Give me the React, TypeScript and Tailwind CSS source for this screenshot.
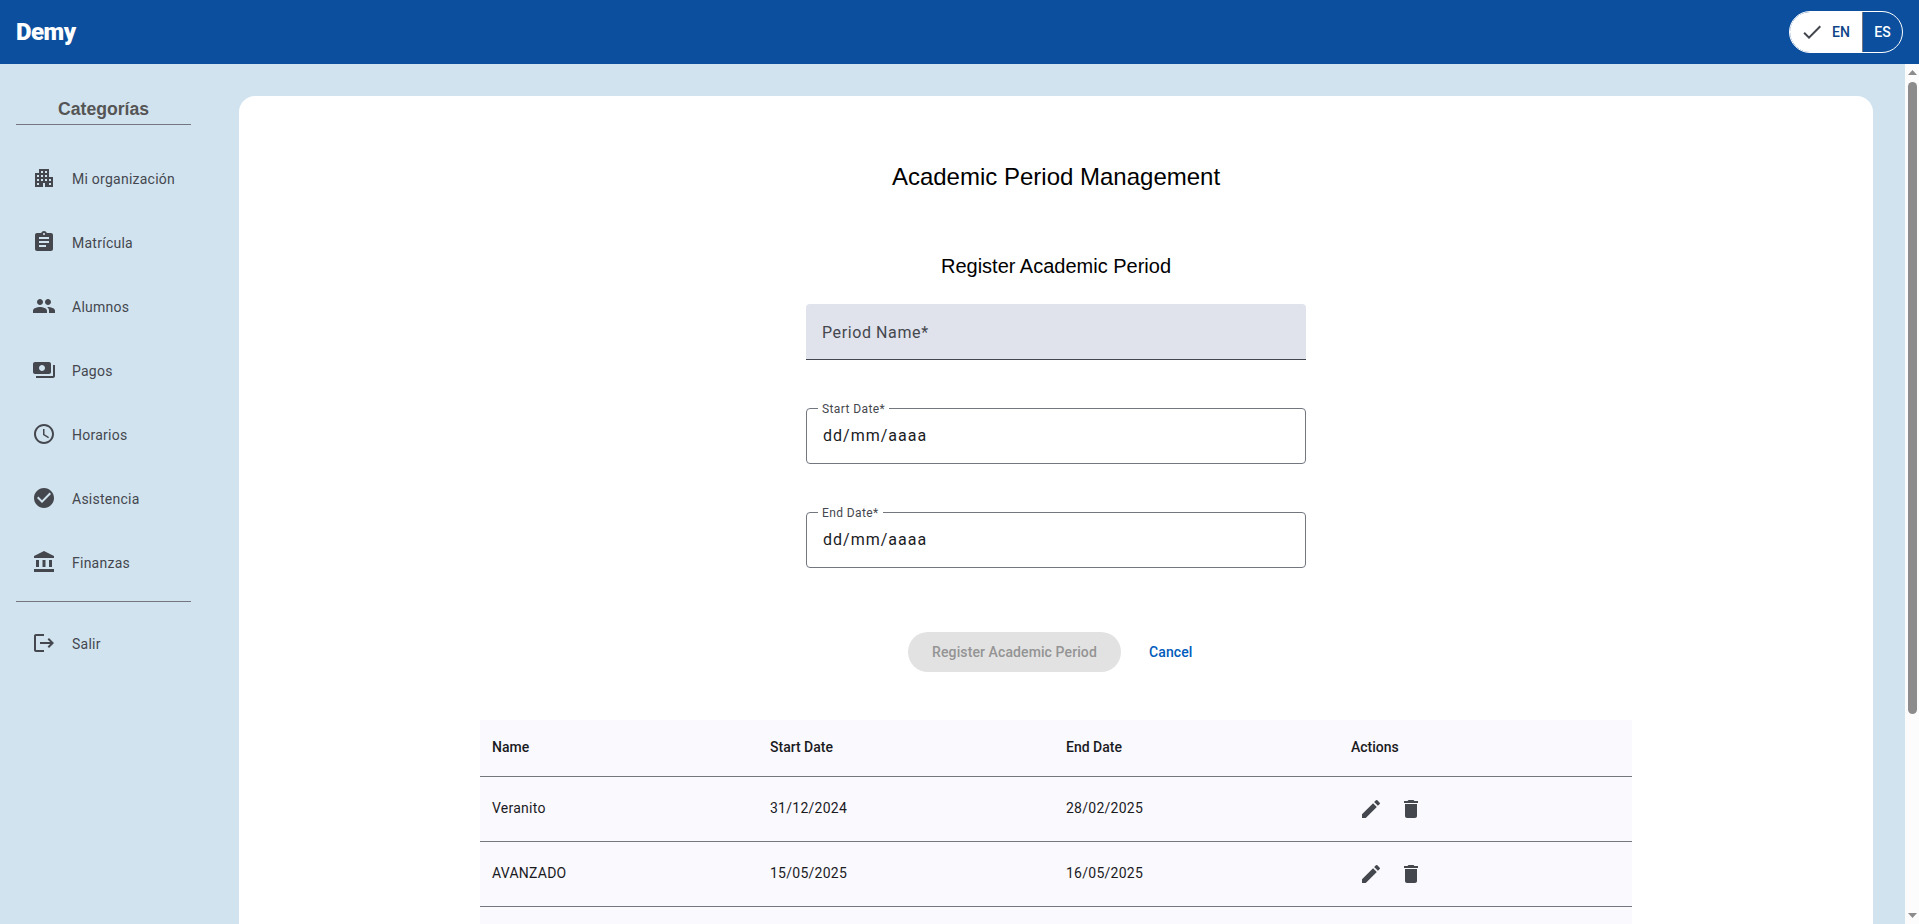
import React from "react";
import { MdApartment, MdAssignment, MdPeople, MdPayments, MdAccessTime, MdCheckCircle, MdAccountBalance, MdLogout, MdEdit, MdDelete, MdCheck } from "react-icons/md";

const roboto = "font-['Roboto',sans-serif]";

const items = [
  { label: "Mi organización", Icon: MdApartment },
  { label: "Matrícula", Icon: MdAssignment },
  { label: "Alumnos", Icon: MdPeople },
  { label: "Pagos", Icon: MdPayments },
  { label: "Horarios", Icon: MdAccessTime },
  { label: "Asistencia", Icon: MdCheckCircle },
  { label: "Finanzas", Icon: MdAccountBalance },
];

function NavItem({ label, Icon }: { label: string; Icon: React.ComponentType<{ size?: number }> }) {
  return (
    <div className="flex h-16 items-center pl-[32px] text-[#44474e]">
      <span className="mb-[2px] block">
        <Icon size={24} />
      </span>
      <span className="ml-[16px] text-[14px] tracking-[0.25px]">{label}</span>
    </div>
  );
}

function DateField({ label }: { label: string }) {
  return (
    <div className="relative flex h-[56px] w-[500px] items-center rounded-[4px] border border-[#74777f] px-[16px]">
      <span className="absolute left-[11px] top-[-8px] bg-white px-[4px] text-[12px] leading-[16px] tracking-[0.4px] text-[#44474e]">{label}</span>
      <span className="text-[16px] tracking-[1px] text-[#1a1b1f]">dd/mm/aaaa</span>
    </div>
  );
}

const rows = [
  ["Veranito", "31/12/2024", "28/02/2025"],
  ["AVANZADO", "15/05/2025", "16/05/2025"],
];

export default function App() {
  return (
    <div className={`flex h-screen flex-col overflow-hidden bg-[#d1e3ef] ${roboto}`}>
      <header className="flex h-[64px] shrink-0 items-center justify-between bg-[#0b4f9e] pl-[16px] pr-[16px]">
        <span className="text-[24px] font-black tracking-[-0.5px] text-white">Demy</span>
        <div className="flex h-[42px] w-[114px] overflow-hidden rounded-full border border-white text-[14px] font-medium">
          <div className="flex w-[72px] items-center bg-white pl-[10px]">
            <span className="text-[#44474e]"><MdCheck size={24} /></span>
            <span className="ml-[8px] text-[#0f4587]">EN</span>
          </div>
          <div className="flex flex-1 items-center justify-center border-l border-[#74777f] text-white">ES</div>
        </div>
      </header>
      <div className="flex min-h-0 flex-1">
        <div className="min-w-0 flex-1 overflow-y-auto">
          <div className="flex min-h-[1122px]">
            <aside className="w-[239px] shrink-0 pt-[32px]">
              <div className="mx-[16px] w-[175px] border-b border-[#74777f] pb-[3px] pt-[2px] text-center font-['Liberation_Sans',sans-serif] text-[17.6px] font-bold leading-[23px] text-[#555555]">Categorías</div>
              <div className="mt-[22px]">
                {items.map((it) => <NavItem key={it.label} {...it} />)}
              </div>
              <div className="mx-[16px] mb-[10px] mt-[6px] w-[175px] border-b border-[#74777f]" />
              <NavItem label="Salir" Icon={MdLogout} />
            </aside>
            <main className="my-[32px] mb-[16px] flex w-[1634px] flex-col items-center rounded-[16px] bg-white font-['Liberation_Sans',sans-serif]">
              <h1 className="mt-[66px] text-[24px] leading-[30px] text-black">Academic Period Management</h1>
              <h2 className="mt-[61px] text-[20px] leading-[26px] text-black">Register Academic Period</h2>
              <div className={`mt-[25px] flex flex-col ${roboto}`}>
                <div className="flex h-[56px] w-[500px] items-center rounded-t-[4px] border-b border-[#44474e] bg-[#e0e2ec] px-[16px] pt-[2px] text-[16px] tracking-[0.6px] text-[#44474e]">Period Name*</div>
                <div className="mt-[48px]"><DateField label="Start Date*" /></div>
                <div className="mt-[48px]"><DateField label="End Date*" /></div>
                <div className="mt-[64px] flex items-center justify-start pl-[102px]">
                  <div className="flex h-[40px] w-[213px] items-center justify-center rounded-full bg-[#e2e2e2] text-[14px] font-medium tracking-[0.1px] text-[#949494]">Register Academic Period</div>
                  <div className="ml-[28px] text-[14px] font-medium tracking-[0.1px] text-[#005cbb]">Cancel</div>
                </div>
              </div>
              <table className={`mt-[48px] w-[1152px] table-fixed border-collapse bg-[#faf9fd] text-left text-[14px] text-[#1a1b1f] ${roboto}`}>
                <colgroup>
                  <col className="w-[278px]" />
                  <col className="w-[296px]" />
                  <col className="w-[285px]" />
                  <col />
                </colgroup>
                <thead>
                  <tr className="h-[56px] border-b border-[#74777f]">
                    <th className="pl-[12px] font-medium">Name</th>
                    <th className="pl-[12px] font-medium">Start Date</th>
                    <th className="pl-[12px] font-medium">End Date</th>
                    <th className="pl-[12px] font-medium">Actions</th>
                  </tr>
                </thead>
                <tbody>
                  {rows.map((r) => (
                    <tr key={r[0]} className="h-[65px] border-b border-[#74777f]">
                      {r.map((c) => <td key={c} className="pl-[12px] tracking-[0.25px]">{c}</td>)}
                      <td className="pl-[20px]">
                        <div className="flex items-center gap-[16px] text-[#44474e]">
                          <MdEdit size={24} />
                          <MdDelete size={24} />
                        </div>
                      </td>
                    </tr>
                  ))}
                  <tr className="h-[65px]"><td colSpan={4} /></tr>
                </tbody>
              </table>
            </main>
          </div>
        </div>
        <div className="flex w-[14px] shrink-0 flex-col items-center bg-[#fcfcfc] pl-[3px] pr-[2px]">
          <svg className="mt-[6px] shrink-0" width="9" height="5" viewBox="0 0 9 5"><path d="M4.5 0L9 5H0z" fill="#8c8c8c" /></svg>
          <div className="mt-[7px] h-[632px] w-[9px] shrink-0 rounded-full bg-[#8c8c8c]" />
          <svg className="mt-auto mb-[6px] shrink-0" width="9" height="5" viewBox="0 0 9 5"><path d="M0 0H9L4.5 5z" fill="#8c8c8c" /></svg>
        </div>
      </div>
    </div>
  );
}
